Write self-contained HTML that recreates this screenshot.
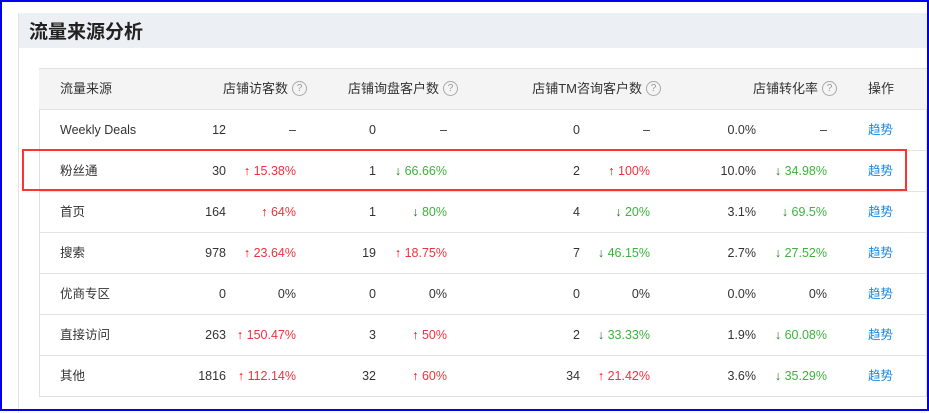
<!DOCTYPE html>
<html><head><meta charset="utf-8"><style>
*{margin:0;padding:0;box-sizing:border-box}
body{width:929px;height:411px;overflow:hidden;background:#fff;font-family:"Liberation Sans","Noto Sans CJK SC",sans-serif;color:#333;position:relative}
.frame{position:absolute;left:0;top:0;width:929px;height:411px;border:2px solid #0000ee;z-index:5;pointer-events:none}
.panel{position:absolute;left:18px;top:13px;width:920px;height:400px;border-left:1px solid #e3e3e3}
.ph{position:absolute;left:19px;top:13px;width:910px;height:35px;background:#eceff3}
.ph span{position:absolute;left:10px;top:4px;font-size:19px;font-weight:bold;color:#222}
.tbl{position:absolute;left:39px;top:68px;width:888px;height:329px;border:1px solid #e0e0e0}
.row{position:absolute;left:39px;width:888px;height:41px;border-top:1px solid #e3e3e3;font-size:12.5px}
.hd{top:68px;background:#f4f4f4;border-top:1px solid #e0e0e0;font-size:13px}
.c{position:absolute;top:0;line-height:40px;text-align:right;white-space:nowrap}
.n{position:absolute;left:21px;top:0;line-height:40px}
.r{color:#f0323c}.g{color:#3cb43c}
.ar{color:#f00}.ag{color:#1a7a1a}
.q{display:inline-block;width:15px;height:15px;border:1px solid #aaa;border-radius:50%;font-size:10px;line-height:13px;text-align:center;color:#999;margin-left:4px;vertical-align:middle;position:relative;top:-1px}
.act{position:absolute;left:829px;top:0;line-height:40px;color:#1b88e0}
.red{position:absolute;left:22px;top:149px;width:885px;height:42px;border:2px solid #f33;z-index:4}
</style></head><body>
<div class="frame"></div>
<div class="panel"></div>
<div class="ph"><span>流量来源分析</span></div>
<div class="tbl"></div>
<div class="row hd"><div class="n">流量来源</div>
<div class="c" style="right:620px">店铺访客数<span class="q">?</span></div>
<div class="c" style="right:469px">店铺询盘客户数<span class="q">?</span></div>
<div class="c" style="right:266px">店铺TM咨询客户数<span class="q">?</span></div>
<div class="c" style="right:90px">店铺转化率<span class="q">?</span></div>
<div class="act" style="color:#333">操作</div></div>
<div class="red"></div>
<div id="rows"></div>
<script>
var d=[["Weekly Deals","12","–","0","–","0","–","0.0%","–"],
["粉丝通","30","u15.38%","1","d66.66%","2","u100%","10.0%","d34.98%"],
["首页","164","u64%","1","d80%","4","d20%","3.1%","d69.5%"],
["搜索","978","u23.64%","19","u18.75%","7","d46.15%","2.7%","d27.52%"],
["优商专区","0","0%","0","0%","0","0%","0.0%","0%"],
["直接访问","263","u150.47%","3","u50%","2","d33.33%","1.9%","d60.08%"],
["其他","1816","u112.14%","32","u60%","34","u21.42%","3.6%","d35.29%"]];
var rights=[226,296,376,447,580,650,756,827];
var h="";
d.forEach(function(r,i){
 h+='<div class="row" style="top:'+(109+i*41)+'px"><div class="n">'+r[0]+'</div>';
 for(var j=0;j<8;j++){var v=r[j+1],s=v;
  if(v[0]=="u")s='<span class="ar">↑</span> <span class="r">'+v.slice(1)+'</span>';
  else if(v[0]=="d")s='<span class="ag">↓</span> <span class="g">'+v.slice(1)+'</span>';
  h+='<div class="c" style="right:'+(927-rights[j])+'px">'+s+'</div>';}
 h+='<div class="act">趋势</div></div>';});
document.getElementById("rows").innerHTML=h;
</script>
</body></html>
